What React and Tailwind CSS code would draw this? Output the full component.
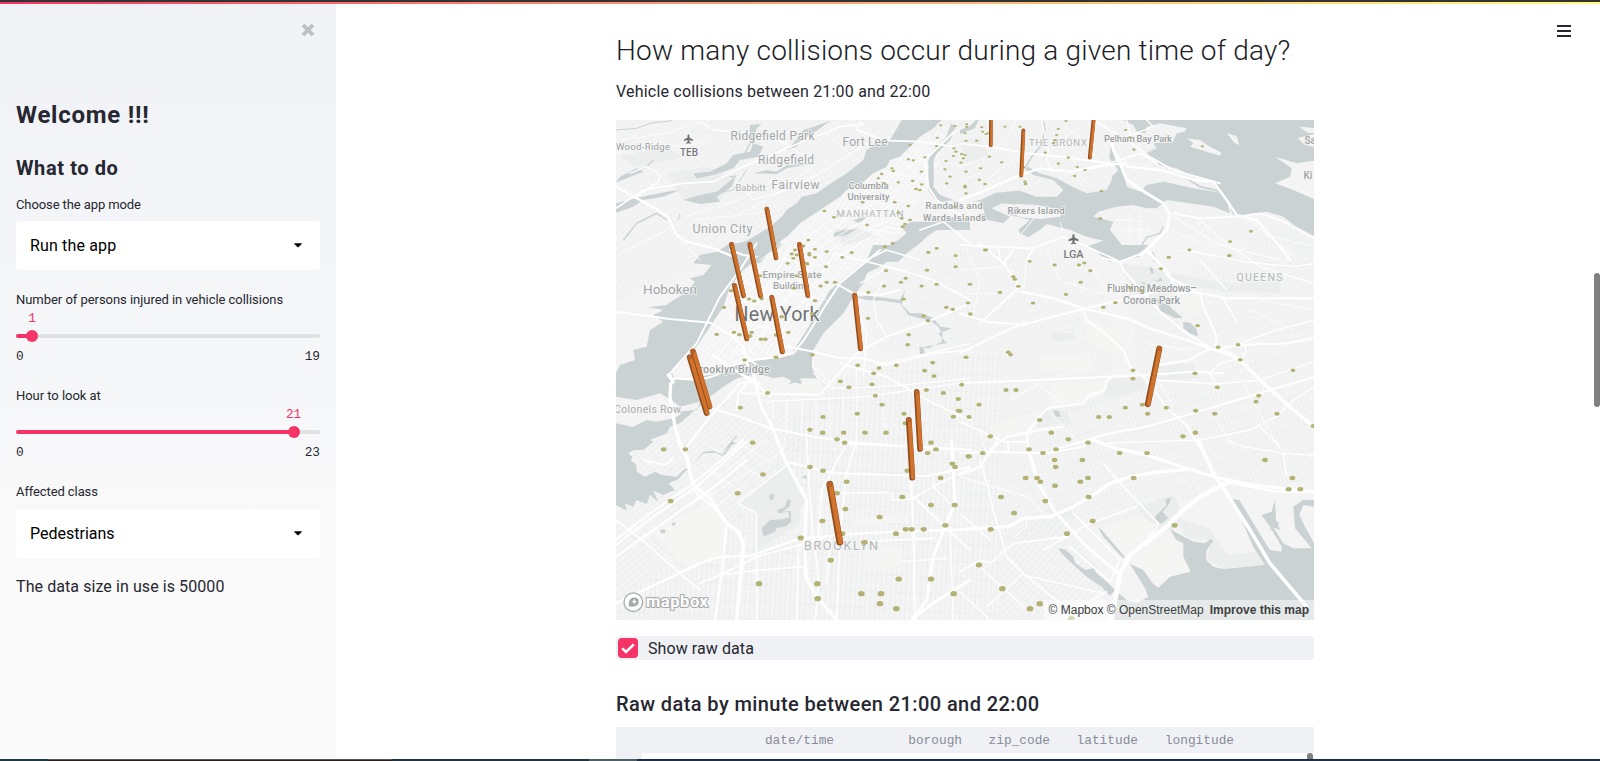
import React from "react";

/* Map geometry is stored in six drawing tiles; each unit is a third of a map pixel. */
const TILES = {
  A: [600, 0],
  B: [960, 0],
  C: [600, 250],
  D: [960, 250],
  E: [600, 440],
  F: [960, 440],
};
const place = (t) => `translate(${TILES[t][0]} ${TILES[t][1]}) scale(0.33333)`;

const WATER = [
  ["A", "M905 360H1025L1000 385L960 410L930 440L900 470L870 480L860 500L820 520L780 555L740 570L720 590L660 630L600 670L560 710L520 740L480 790H335L350 765L385 745L400 735L440 722L470 705L510 680L545 650L560 630L590 610L605 590L650 580L700 545L740 520L790 480L800 450L840 425L870 420Z"],
  ["C", "M390 -20L350 5L300 15L280 40L335 45L310 75L270 85L285 95L255 130L220 150L200 165L145 172L190 180L160 195L190 215L150 240L140 290L100 300L105 330L60 345L48 370V440L110 450L180 430L215 450L240 470L300 455L290 480L232 485L245 492L220 505L170 515L140 510L100 530L48 535V600H130L160 575L150 570L200 550L210 530L240 520L330 440L370 410L410 385L470 372L500 378L520 385L550 380L575 392L565 402L585 398L605 402L600 385L650 385L635 350L640 300L670 250L730 190L760 140L790 100L800 70L850 45L895 0L910 -15H820L800 30L720 95L690 120L660 170L620 240L575 310L530 325L430 335L350 370L260 390L222 385L215 365L290 290L330 230L370 170L390 110L430 60L480 20L530 0L550 -20Z"],
  ["C", "M765 140L800 150L850 152L900 160L925 195L960 205L985 210L1010 225L1028 250L1025 275L985 295L958 290L960 312L975 312L970 290L1040 280L1015 250L1055 235L1020 230L1000 205L965 190L930 190L905 165L915 120L900 150L860 145L810 138Z"],
  ["A", "M810 785L850 745L895 720L920 700L905 680L935 665L1010 665L1045 650L1110 655V690L1050 690L1010 690L980 710L960 730L920 760L895 785Z"],
  ["A", "M985 480L1000 470L1002 540L1000 560L1020 585L1060 600L1100 600V610L1050 612L1005 600L985 570Z"],
  ["B", "M0 610L60 600L110 578L180 572L230 590L290 590L310 570L280 540L220 525L195 508L205 500L235 518L290 535L340 562L380 580L440 570L460 530L480 540L500 560L540 575L560 555L610 545L700 565L795 580L810 640L760 620L690 610L620 600L590 625L560 625L520 615L470 620L415 635L400 650L460 665L450 690L490 740L560 745L540 770L450 785L405 750L385 738L430 722L380 710L330 690L260 672L240 690L205 712L180 700L175 690L210 660L150 645L150 630L180 615L125 610L95 625L150 650L130 670L60 655L0 665Z"],
  ["B", "M490 360H1062V600L1000 570L960 568L945 550L970 540L990 530L995 505L950 485L945 470L975 480L1010 485L1062 475V435L1035 435L1010 415L1035 400L1062 395V590V708L1010 680L970 650L920 635L860 645L820 645L800 600L760 550L680 520L650 505L600 495L560 460L590 445L580 430L640 425L650 400L675 395L680 385L600 370L560 380L555 400L530 395L520 375Z"],
  ["B", "M452 440L462 445L465 480L490 510L500 560L470 570L455 530L475 510L448 475Z"],
  ["D", "M395 -15H565L545 5L510 25L480 35L440 25L420 15Z"],
  ["D", "M588 140L600 155L625 165L640 180L668 203L645 205L600 182Z M670 215L690 218L708 235L715 260L690 250L670 235Z M568 48L580 58L582 72L572 68Z M578 88L595 92L600 80L608 92L592 95Z M280 480L295 482L303 500L288 500Z"],
  ["E", "M48 -50L140 -30L110 10L120 20L85 40L98 52L92 62L108 72L110 95L135 110L165 95L185 105L230 110L250 90L275 78L250 100L235 118L205 130L225 150L205 158L190 165L160 152L175 185L150 165L140 192L110 180L100 200L75 190L80 212L48 195Z"],
  ["E", "M275 75L310 40L350 38L370 50L395 15L410 10L395 5L380 30L365 42L340 32L310 35Z"],
  ["E", "M485 265L510 240L545 238L568 232L565 215L535 220L532 210L555 200L562 178L572 180L568 200L548 215L572 212L574 245L560 258L530 265L525 275L490 290Z M508 165L522 160L520 180L508 178Z M180 268L197 270L195 280L183 280Z M215 250L226 246L226 254L217 258Z M605 112L618 105L620 118Z"],
  ["F", "M630 268L680 295L700 305L735 310L752 296L760 302L740 330L738 360L760 380L790 387L915 375L880 320L818 178L838 180L905 290L930 330L965 335L965 320L930 260L905 225L935 215L945 180L948 240L960 270L940 262L970 310L1000 325L1055 325L1035 300L1005 265L1000 200L1030 180H1062V200L1030 195L1018 225L1035 260L1062 310V540H450L470 455L500 480L530 490L565 470L555 445L510 372L550 390L578 430L595 443L630 410L692 395L670 350V310L650 300Z"],
  ["F", "M413 260L425 270L494 350L488 354L430 290Z M295 325L315 328L340 350L345 368L375 390L400 385L410 400L445 430L465 450L450 468L425 440L380 410L335 370L305 340Z M585 230L605 210L620 195L615 180L635 172L625 195L608 215L625 235L605 250L588 248Z"],
  ["A", "M280 520L330 515L380 490L400 465L450 455L460 430L490 440L475 470L420 480L400 505L340 525L290 535Z M48 610L120 592L200 575L240 570L190 590L130 600L100 620L48 638Z M300 585L350 575L400 535L385 530L410 525L395 560L350 590L360 605L300 612L250 600Z M460 520L500 510L530 515L560 495L640 490L560 505L530 522Z M48 548L60 530L110 505L130 515L80 535Z M340 775L385 755L380 780Z"],
  ["A", "M450 375L485 372L470 385L460 430L448 420Z M610 390L640 380L690 362L640 400L610 415L590 440L560 450L580 430Z"],
  ["A", "M700 700L730 690L770 688L740 705L705 712Z M760 660L790 650L800 655L775 670Z"],
  ["B", "M0 390L30 378L48 360H55L45 385L0 402Z"],
];

const WATERLINES = [
  ["A", "M48 390L110 385L150 370L215 362", 3],
  ["A", "M1060 375L1045 415L1005 455L992 480", 15],
  ["A", "M450 430L430 470L380 500M160 480L140 500L100 520M70 720L110 670L170 640L200 660", 4],
  ["A", "M440 510L400 570L350 580M240 640L235 660", 3],
  ["B", "M195 505L215 470L245 435L255 390L250 365", 5],
  ["B", "M680 535L720 560L800 578", 5],
  ["B", "M545 735L560 712L600 700L610 680", 4],
  ["D", "M575 5L585 20L582 35M545 98L555 102", 5],
  ["F", "M910 225L940 250L930 230L955 250L930 270", 4],
  ["C", "M375 600L410 558", 4],
];

const ISLANDS = [
  ["B", "M680 415L720 420L750 440L785 458L780 467L740 455L690 440L700 430Z"],
  ["B", "M800 400L830 408L838 435L825 430Z"],
  ["B", "M145 630L170 612L230 615L310 630L300 650L240 657L180 652Z"],
  ["B", "M1018 380L1062 384V398L1045 400Z M1012 415L1062 402V440L1035 435Z M945 470L1010 490L1062 482V598L1000 570L945 550L990 530L995 505Z"],
  ["A", "M985 620L1040 602L1110 598V655L1045 650L1000 645Z"],
  ["B", "M0 600L60 605L75 640L30 655L0 652Z"],
];

const PARKS = [
  ["E", "M415 190L560 75L625 180L600 200L595 255L470 330V220Z"],
  ["F", "M530 200L640 165L660 200L640 270L590 280Z M640 230L745 265L805 345L935 330L915 375L790 385L740 360L755 300L680 295Z M270 215L330 205L345 230L290 235Z"],
  ["D", "M440 390L550 375L560 420L430 445Z M580 350L700 340L710 385L580 390Z M480 40L620 60L640 130L580 150L500 90Z M630 70L800 100L960 95L960 130L800 125L640 95Z M210 495L250 480L320 485L330 515L225 535Z M270 250L345 248L340 270L275 275Z"],
  ["A", "M200 520L330 500L400 540L360 600L250 600Z M700 690L770 680L830 710L730 735Z M60 470L190 440L250 470L110 500Z"],
  ["B", "M560 450L590 440L600 490L560 480Z M0 420L60 415L90 470L20 490Z"],
];

const PALE = [
  ["E", "M160 275L310 190L385 255L365 340L265 385Z M760 235L925 225L930 245L765 255Z M790 330L905 325L900 380L790 385Z"],
  ["D", "M270 415L440 388L430 435L370 455L265 470Z M240 320L385 310L405 360L240 362Z M80 530L250 480L215 560L110 565Z M640 150L715 130L720 190L680 195Z M370 205L480 240L470 310L385 275Z"],
  ["F", "M450 265L540 230L590 255L540 300L500 345L440 290Z M510 360L640 285L690 395L590 440Z"],
  ["C", "M505 385L555 385L600 400L660 388L670 430L515 430Z"],
];

const ROADS = [
  ["A", "M860 422L960 425L1062 440", 5],
  ["A", "M48 560L110 595L165 625L205 650L225 700L260 725L340 745L400 770", 7],
  ["A", "M48 625L100 590L130 570L250 550L340 545L430 500L500 470L620 420L720 380L790 372", 5],
  ["A", "M90 520L140 500L180 525L175 545L110 590M300 365L340 390L450 400L560 430M780 365L770 390L840 415", 4],
  ["A", "M230 705L300 780M400 530L460 600L560 570L660 520L800 430", 3],
  ["A", "M1062 395L1000 455L975 480L985 560L1010 600L1100 660", 6],
  ["A", "M540 780L700 650L850 550L960 480M600 780L760 680L900 600M700 780L860 680L905 690M820 690L900 700", 3],
  ["A", "M570 780L730 665L880 575L980 530M640 780L800 690L905 645M480 780L560 720M1010 600L940 600L900 640M870 520L960 530M930 450L985 500", 2.2],
  ["A", "M48 460L160 430L250 440L330 420M60 420L200 400L300 365M420 640L500 600L640 500M250 650L420 600L520 540M60 760L200 690M280 660L470 640L560 610M500 400L620 470M680 400L760 470", 2],
  ["A", "M960 690L1030 665L1110 730M800 780L860 750L960 780", 5],
  ["B", "M0 600L60 578L180 525L240 505L330 515L440 495L495 490L500 500L600 510L640 520L700 540L760 545L800 600L830 645L890 660L960 740L990 780", 7],
  ["B", "M455 425L460 450L480 490L500 540L560 580L610 610L630 645L620 690L570 740L540 765", 9],
  ["B", "M0 430L90 440L200 460L300 470L450 490L540 460L590 490M400 360L500 420L560 465L640 510L780 550", 5],
  ["B", "M245 360L265 450L260 475L275 515M500 360L510 400M560 360L580 380L500 410", 4],
  ["B", "M0 500L80 470L150 400L170 360M60 560L130 500L200 450M300 370L380 430L420 490M0 540L60 520M330 515L400 560", 2.2],
  ["B", "M0 735L100 740L220 745L310 710L370 735L470 780", 5],
  ["B", "M120 780L115 745M200 780L220 745M640 640L720 655L830 650L900 640L960 660L1062 715", 5],
  ["B", "M700 645L790 720L850 780M640 650L780 735L960 780M870 660L1000 770", 3],
  ["B", "M185 700L222 655M300 668L310 690", 3],
  ["B", "M470 660L560 665M480 690L570 690M510 640V730M540 640V735M650 700L760 740M640 750L780 770M900 700L1062 740", 2],
  ["C", "M48 185L210 207L330 218L400 260L430 290", 6],
  ["C", "M390 0L430 15L470 20", 6],
  ["C", "M470 -20L420 60L360 140L330 200L290 280L210 370L215 385L300 390L350 375L400 345L460 330L540 320L580 310L615 265L650 210L680 160L720 100L840 0", 6],
  ["C", "M205 375L220 395L212 400L210 440L225 530L245 600", 10],
  ["C", "M340 315L380 345L470 400L510 440M430 290L440 340L460 370L480 460L520 540L545 600", 8],
  ["C", "M420 300L450 330L470 345M540 285L640 305L720 325L790 325L860 345", 6],
  ["C", "M700 96L760 130L840 135L900 120", 6],
  ["C", "M700 10L800 35L900 60L1000 90L1110 150", 5],
  ["C", "M260 590L330 500L420 400L440 395L480 400", 7],
  ["C", "M330 475L420 500L510 535L640 560L780 580L1110 600", 6],
  ["C", "M410 480L415 430L440 400M430 430L660 434L690 400L770 310L860 260L960 225L1110 160", 6],
  ["C", "M500 455L800 440L1110 395M690 415L860 410L1110 385M760 140L800 250L790 380M830 345L1110 280", 3.5],
  ["C", "M845 100L820 150L830 210L860 260M780 100L850 60M640 370L690 410M640 300L640 350L700 410", 3.5],
  ["C", "M720 340L860 380L1000 460L1110 510M860 345L1000 310L1110 300", 5],
  ["C", "M360 310L410 250L470 150L540 50M400 260L480 230L560 240M390 330L440 240L520 110M450 300L520 200L620 60M500 310L590 180L700 20", 3],
  ["C", "M420 250L530 60L570 0M470 290L560 150L670 0M530 290L600 190M380 200L600 270M410 150L640 200M440 100L680 150M470 60L700 90M500 20L760 60", 2.2],
  ["C", "M550 600L560 540M620 600V540M700 600L740 570M770 600V330M860 590L850 470M520 450L515 540M560 450V545M605 455V548M648 450V560M690 440V565M730 430V572", 2.5],
  ["D", "M0 190L80 215L190 225L240 210L370 178L500 145L590 125L720 128L800 145L1062 145", 6],
  ["D", "M160 0L130 40L180 110L60 220M130 40L60 -20M0 310L100 260L200 215", 5],
  ["D", "M180 125L280 145L380 178L500 205L570 235L680 270L750 295L840 325", 7],
  ["D", "M370 180L380 210L440 255L490 300L510 350L555 385L590 430L620 475L680 525L725 600", 6],
  ["D", "M430 25L480 35L490 60L560 140L600 185L680 250L745 290M480 35L560 5L620 60L640 100", 6],
  ["D", "M565 0L590 30L625 80L720 130L730 170L770 260L765 290M1062 265L980 280L840 285L740 300L690 330L600 345", 6],
  ["D", "M770 290L840 330L900 390L1000 480L1062 530", 10],
  ["D", "M845 280L860 300L845 330M840 280L950 240L1062 210M790 145L830 215", 4],
  ["D", "M0 400L230 390L450 380L560 375L700 365L790 370M460 375L440 395L435 420L390 435L370 460L260 475L200 550L205 600", 6],
  ["D", "M90 600L140 560L240 540L310 530M200 575L130 575L0 515M280 600L450 550L560 530L700 490L900 430L1062 380", 6],
  ["D", "M580 390L770 402L900 390L1062 335M765 400L750 370L780 340L840 325", 4],
  ["D", "M440 580L560 575L720 570L870 540L950 500L1000 450L1062 410", 4],
  ["D", "M680 0L850 35L1000 50L1062 40M830 0L900 50L1062 100M720 30L800 120", 4],
  ["D", "M60 540L75 600M150 450L240 400M240 410L310 460M260 475L300 520L350 570", 3],
  ["D", "M0 60L130 50M20 0L60 90L40 190M200 30L190 120M260 0L300 90L420 130M0 130L110 130M400 60L450 130M520 240L495 300M550 280L690 300M900 150L1062 180M870 180L1000 240M850 400L960 600M760 500L830 600M600 400L640 470", 2.2],
  ["E", "M235 0L260 50L275 120L285 140L330 175L380 250L415 275L430 310L425 380L410 540", 11],
  ["E", "M48 300L150 220L280 130L400 30L430 0M48 315L160 230L290 140L440 5", 6],
  ["E", "M48 350L160 270L330 150L440 60M285 155L370 230L380 250L365 400L345 540", 7],
  ["E", "M48 240L150 320L250 410L300 450M300 430L360 405L470 350L600 315L680 290", 5],
  ["E", "M530 0L560 70L620 180L615 280L618 410L650 470L710 540", 10],
  ["E", "M560 65L660 90L700 100L980 108L1110 80", 6],
  ["E", "M620 0L630 180L640 300L650 360L655 440L645 540M770 0L740 100L720 280L710 540M735 20L665 150L655 290", 5],
  ["E", "M48 490L300 370L360 350L450 348L600 295L780 280L900 275L1110 268", 7],
  ["E", "M360 405L480 390L610 380M470 330V540M595 320L590 540M690 290L680 430M780 305L1000 295", 5],
  ["E", "M930 0L935 170L940 260L945 540M730 10L1110 30M940 170L1040 265L1110 330", 6],
  ["E", "M1055 0L1065 190L1035 260L1000 350L980 480L935 540M1110 420L1000 490L945 530", 9],
  ["E", "M700 160L870 158M875 160V180L935 178L1000 140L1110 85M1000 110V140L1050 190M905 365L1040 355M1050 260L1060 540", 4],
  ["E", "M415 190L560 75M130 60L200 75L220 50M415 190L470 220V330", 4],
  ["E", "M300 150L500 0M320 170L540 40M350 200L440 130M110 40L160 80L230 60M280 60L420 150M330 20L480 110M400 0L520 70M100 250L230 380", 2.2],
  ["F", "M0 268L110 262L150 258L190 235L270 230L330 205L400 165L450 130L510 110L600 95L690 88", 10],
  ["F", "M400 0L450 20L560 45L680 85L780 115L880 135L1062 155", 9],
  ["F", "M715 0L760 100L800 160L870 270L930 370L1040 500", 11],
  ["F", "M810 125L720 170L670 210L620 260L510 345L480 400L455 540", 14],
  ["F", "M815 130L950 155H1062", 7],
  ["F", "M205 30L240 140L285 215L370 310L480 405", 9],
  ["F", "M0 40L90 35L260 40L370 20L400 0M90 35L60 80L0 105M110 5L90 40M145 10V40", 6],
  ["F", "M60 60L80 130L105 230L140 350L190 400L300 490", 5],
  ["F", "M0 395L60 360L90 370L160 310L320 290L390 250L530 200M320 290L250 330M330 320L450 425L480 360L340 220", 5],
  ["F", "M190 405L430 460M190 400L80 500M60 380L190 500M0 455L90 540M290 540L440 455", 4],
  ["F", "M430 70L500 150L595 250L590 265L565 290", 5],
  ["F", "M800 0L850 20L970 40L1062 45M970 40L980 110M900 -40L960 20M0 220L90 300", 4],
  ["F", "M270 235L200 170L0 110M165 290L200 260L200 235", 3],
];

/* Textures for the dense street grid: polygon, pattern id */
const GRIDS = [
  ["616,120 900,120 850,170 790,210 740,248 700,265 616,300", "nj"],
  ["930,120 1320,120 1320,250 1000,210 930,180", "nj"],
  ["950,125 935,175 890,245 840,275 790,355 715,375 675,375 735,270 800,215 900,150", "manh"],
  ["616,460 700,400 790,390 810,440 740,520 616,600", "slope"],
  ["616,600 730,525 790,440 800,380 1000,350 1000,620 616,620", "vert"],
  ["1000,350 880,350 860,300 900,250 1080,250 1110,310 1110,400 1000,450", "queens"],
  ["1000,430 1100,390 1314,400 1314,480 1180,500 1130,520 1000,545", "vert2"],
  ["1000,545 1060,500 1110,590 1040,620 1000,620", "slope2"],
  ["1130,300 1314,210 1314,400 1140,400", "queens"],
];

const PILLARS = [
  [991, 115, 990.7, 145.5, 3.6],
  [1023.3, 130.5, 1021.2, 175.5, 3.8],
  [1094, 115, 1089.8, 157.5, 3.8],
  [766.8, 209, 776, 258, 4.6],
  [731.5, 244.3, 743.5, 295.7, 4.8],
  [749.8, 244.3, 760.5, 295.7, 4.8],
  [799.4, 244.3, 807.8, 295.7, 4.8],
  [734.5, 285.5, 746.7, 338.7, 5],
  [771.8, 297.5, 782.3, 351.7, 5],
  [854.7, 295.2, 860.5, 348.8, 5],
  [693, 351.4, 709.5, 406.6, 5.6],
  [689.8, 357.4, 706.6, 413, 5.8],
  [916.7, 391.8, 920, 449, 5.6],
  [908.8, 420, 912.3, 477.7, 5.8],
  [829.8, 484.3, 839.8, 542, 6.8],
  [1159.3, 348.6, 1147.8, 404.2, 6],
];

const DOTS = {
  A: "1022,376 1065,378 1100,380 1012,413 1062,445 1068,455 1060,468 1085,462 1083,488 1010,438 930,435 925,478 940,481 975,472 964,515 880,513 876,505 845,522 835,535 895,547 938,543 965,553 960,570 948,567 853,550 788,607 884,607 925,618 895,638 905,655 930,660 908,680 915,672 673,633 702,652 801,675 855,740 878,730 985,757 1010,745 1038,483 1035,508 1050,530 1098,515 1040,550 1095,562 1065,620 625,720 610,738 585,750 645,748 628,760 605,770 590,765",
  B: "20,373 65,382 135,380 180,380 15,400 18,422 50,422 78,402 85,400 92,434 68,395 15,465 10,475 88,470 125,487 62,505 58,540 15,558 18,580 75,552 195,545 197,552 190,502 256,458 325,473 295,491 352,501 375,510 344,528 285,420 290,405 295,387 318,363 280,430 497,390 522,449 727,439 424,573 421,656 873,694 810,725 688,750 626,772 808,767 78,750 510,412",
  C: "575,12 628,15 580,25 620,40 563,40 645,22 678,50 680,5 727,22 755,8 480,78 590,78 622,42 582,115 680,97 705,97 662,108 372,172 393,122 447,147 463,153 485,146 645,152 545,200 637,192 350,253 402,247 418,254 455,247 450,258 483,268 496,268 528,255 565,247 434,330 528,322 637,314 503,429 421,473 805,127 852,108 858,62 903,97 917,85 965,108 1010,103 981,61 985,7 1067,17 1067,50 911,147 804,205 971,198 984,212 926,254 923,284 1039,172 1058,178 889,346 837,354 821,370 773,346 721,394 747,412 816,403 826,437 846,464 912,491 669,501 772,491 630,539 668,548 731,548 711,568 795,548 858,548 998,338 974,362 1002,378 979,420 1030,429 1075,447 1075,482 1060,500 916,520",
  D: "75,0 209,34 284,45 357,45 373,39 391,62 362,97 160,80 165,88 175,109 120,127 30,103 24,159 219,159 318,133 31,192 430,172 466,158 626,22 808,17 603,56 512,114 545,122 713,227 774,292 834,284 841,329 999,361 705,370 772,412 896,437 888,455 951,491 1060,528 145,307 152,314 18,322 5,404 138,420 168,420 519,361 519,386 57,464 27,501 239,510 274,548 91,559 325,568 416,501 448,501 496,473 547,464 563,491 619,473 707,482 764,491 706,548 669,559 0,483",
  E: "191,28 256,28 458,8 212,183 413,160 489,103 477,431 630,81 669,92 740,125 711,160 736,207 667,243 602,294 727,281 692,361 652,431 653,476 794,307 839,231 907,171 922,92 983,39 1008,28 993,8 1057,71 1065,81 1022,114 1064,195 993,195 888,281 917,268 935,268 971,268 1036,256 896,417 993,417 784,461 843,461 840,491 889,506 1061,461 734,8 1105,49",
  F: "27,49 68,39 207,28 249,39 288,28 384,8 284,60 287,81 367,60 197,114 231,114 241,125 285,137 361,125 384,114 256,183 123,171 162,219 92,268 386,171 398,243 321,281 521,114 479,39 561,39 644,256 915,60 997,114 986,148 1021,148 57,375 127,446 210,506 239,491 334,536",
};

/* Dots grow towards the viewer, so their size follows the vertical position. */
const DISCS = Object.entries(DOTS).flatMap(([t, list]) =>
  list.split(" ").map((p) => {
    const [x, y] = p.split(",").map(Number);
    const py = TILES[t][1] + y / 3;
    const near = (py - 120) / 500;
    return [TILES[t][0] + x / 3, py, 1.65 + near * 1.75, 0.95 + near * 1.75];
  })
);

/* text, centre x, baseline, width, size, colour, weight */
const LABELS = [
  ["Wood-Ridge", 643, 150, 54, 9.5, "#9b9fa0", 400],
  ["TEB", 689, 156, 18, 10, "#76797a", 500],
  ["Ridgefield Park", 772.5, 140, 84, 12, "#a3a6a7", 400],
  ["Ridgefield", 786, 163.5, 56, 12, "#a3a6a7", 400],
  ["Fort Lee", 865, 146, 45, 12, "#a3a6a7", 400],
  ["Babbitt", 750.5, 191, 30, 9.4, "#abaeaf", 400],
  ["Fairview", 795.5, 189, 48, 12, "#a3a6a7", 400],
  ["Columbia", 868.5, 189, 40, 9.5, "#9b9fa0", 500],
  ["University", 868.5, 199.5, 42, 9.5, "#9b9fa0", 500],
  ["MANHATTAN", 870, 217, 67, 9.5, "#b3b6b6", 400],
  ["Randalls and", 954, 209, 57, 9.5, "#9b9fa0", 500],
  ["Wards Islands", 954.5, 221, 63, 9.5, "#9b9fa0", 500],
  ["Union City", 722.5, 233, 60, 12.5, "#a3a6a7", 400],
  ["THE BRONX", 1058, 145.5, 58, 9.5, "#b3b6b6", 400],
  ["Pelham Bay Park", 1138, 141.5, 68, 9.5, "#9b9fa0", 500],
  ["Rikers Island", 1036, 214, 57, 9.5, "#9b9fa0", 500],
  ["LGA", 1073.5, 258, 20, 11, "#76797a", 500],
  ["Empire State", 792, 278, 59, 9.8, "#a3a6a7", 500],
  ["Building", 791, 289, 36, 9.8, "#a3a6a7", 500],
  ["Hoboken", 670, 294, 54, 13.5, "#a3a6a7", 400],
  ["New York", 777, 320.6, 85, 19.6, "#6f7273", 400],
  ["Brooklyn Bridge", 731, 373, 77, 10.5, "#9b9fa0", 500],
  ["Colonels Row", 647.5, 413, 67, 10.5, "#a9acad", 400],
  ["QUEENS", 1259.5, 281, 46, 10.5, "#b3b6b6", 400],
  ["Flushing Meadows–", 1152, 292, 90, 10.5, "#9b9fa0", 500],
  ["Corona Park", 1151.5, 303.5, 57, 10.5, "#9b9fa0", 500],
  ["BROOKLYN", 841, 550, 74, 12.5, "#b3b6b6", 400],
];

function Layer({ items, fill }) {
  return items.map(([t, d], i) => <path key={i} transform={place(t)} d={d} fill={fill} />);
}

function GridPattern({ id, angle, w, h, color, strong }) {
  return (
    <pattern id={id} width={w} height={h} patternUnits="userSpaceOnUse" patternTransform={`rotate(${angle})`}>
      <path d={`M0 0V${h}`} stroke={color} strokeWidth={strong} />
      <path d={`M0 0H${w}`} stroke={color} strokeWidth="1" />
    </pattern>
  );
}

function Plane({ x, y, s }) {
  return (
    <path
      transform={`translate(${x} ${y}) scale(${s})`}
      d="M0-5C.9-5 1.1-4 1.1-3V-1.4L5 .6V2.2L1.1 1.2V3.4L2.6 4.5V5.3L0 4.8L-2.6 5.3V4.5L-1.1 3.4V1.2L-5 2.2V.6L-1.1-1.4V-3C-1.1-4-.9-5 0-5Z"
      fill="#6f7273"
    />
  );
}

function CollisionMap() {
  return (
    <svg viewBox="616 120 698 500" width="698" height="500" className="block">
      <defs>
        <GridPattern id="nj" angle={-28} w={5} h={7} color="#ebeded" strong={1} />
        <GridPattern id="manh" angle={37} w={4.5} h={9} color="#fdfdfd" strong={1.2} />
        <GridPattern id="slope" angle={50} w={5} h={14} color="#e8ecec" strong={1} />
        <GridPattern id="vert" angle={3} w={5} h={17} color="#e6eaea" strong={1} />
        <GridPattern id="vert2" angle={-16} w={4} h={13} color="#e8ecec" strong={1} />
        <GridPattern id="slope2" angle={42} w={5} h={12} color="#e6eaea" strong={1} />
        <GridPattern id="queens" angle={-12} w={4.5} h={8} color="#ebeeee" strong={1} />
      </defs>
      <rect x="616" y="120" width="698" height="500" fill="#f3f4f3" />
      {GRIDS.map(([pts, id], i) => (
        <polygon key={i} points={pts} fill={`url(#${id})`} />
      ))}
      <Layer items={PARKS} fill="#ebeeed" />
      <Layer items={PALE} fill="#f5f5f4" />
      <Layer items={WATER} fill="#cad2d3" />
      {WATERLINES.map(([t, d, w], i) => (
        <path key={i} transform={place(t)} d={d} fill="none" stroke="#cad2d3" strokeWidth={w} />
      ))}
      <Layer items={ISLANDS} fill="#f3f4f3" />
      {ROADS.map(([t, d, w], i) => (
        <path key={i} transform={place(t)} d={d} fill="none" stroke="#ffffff" strokeWidth={w} strokeLinejoin="round" strokeLinecap="round" />
      ))}
      <g fontFamily='Roboto, "Liberation Sans", sans-serif' textAnchor="middle">
        {LABELS.map(([text, x, y, w, size, color, weight], i) => (
          <text key={i} x={x} y={y} textLength={w} fontSize={size} fontWeight={weight} fill={color} stroke="#f6f7f7" strokeWidth="1.6" strokeLinejoin="round" paintOrder="stroke">
            {text}
          </text>
        ))}
        <g textAnchor="start" fontSize="10" fontWeight="500" fill="#a3a6a7">
          <text x="1304.5" y="144">Sa</text>
          <text x="1303.5" y="179">Ki</text>
        </g>
      </g>
      <Plane x={688.5} y={139} s={0.9} />
      <Plane x={1073.5} y={239} s={1} />
      <g fill="#b3b274">
        {DISCS.map(([x, y, rx, ry], i) => (
          <ellipse key={i} cx={x} cy={y} rx={rx} ry={ry} />
        ))}
      </g>
      {PILLARS.map(([x1, y1, x2, y2, w], i) => (
        <g key={i} strokeLinecap="round">
          <path d={`M${x1} ${y1}L${x2} ${y2}`} stroke="#8f4d1e" strokeWidth={w} />
          <path d={`M${x1 + 0.7} ${y1}L${x2 + 0.7} ${y2}`} stroke="#d1722d" strokeWidth={w * 0.66} />
          <circle cx={x1} cy={y1} r={w * 0.42} fill="#b8622a" />
        </g>
      ))}
      <g>
        <circle cx="633.3" cy="602.2" r="9.3" fill="#fff" stroke="#a9acac" strokeWidth="1.4" />
        <path d="M628.9 606.4C628.2 602 629.6 598 634 597.6C637.2 597.5 638.9 599.6 638.7 602.2C638.3 605.8 634 607.2 628.9 606.4Z" fill="#a4a7a7" />
        <path d="M634.3 598.8L635.2 600.7L637.1 601.6L635.2 602.5L634.3 604.4L633.4 602.5L631.5 601.6L633.4 600.7Z" fill="#fff" />
        <text x="646" y="606.5" textLength="62" fontFamily='Roboto, "Liberation Sans", sans-serif' fontSize="16.5" fontWeight="700" fill="#fff" stroke="#a9acac" strokeWidth="2.2" strokeLinejoin="round" paintOrder="stroke">
          mapbox
        </text>
      </g>
    </svg>
  );
}

function Select({ value, tracking }) {
  return (
    <div className="flex h-[49px] shrink-0 items-center justify-between rounded-[4px] bg-white pr-[18px] pl-[14px] text-base text-black">
      <span className={tracking}>{value}</span>
      <svg width="8" height="5" viewBox="0 0 8 5">
        <path d="M.3.3H7.7V1L4.6 4.1Q4 4.6 3.4 4.1L.3 1Z" fill="#000" />
      </svg>
    </div>
  );
}

function Slider({ label, value, max }) {
  const pct = `${(value / max) * 100}%`;
  return (
    <div className="flex flex-col">
      <div className="h-5 text-[13px] leading-5 tracking-[-0.04px] whitespace-nowrap">{label}</div>
      <div className="relative mt-px h-[39px] font-['Liberation_Mono',monospace] text-[12.8px] leading-4 text-[#f63366]">
        <span className="absolute top-0 -translate-x-1/2" style={{ left: pct }}>{value}</span>
        <div className="absolute inset-x-0 top-[23px] h-1 overflow-hidden rounded-full bg-[#e0e1e2]">
          <div className="h-full bg-[#f63366]" style={{ width: pct }} />
        </div>
        <div className="absolute top-[19px] size-3 -translate-x-1/2 rounded-full bg-[#f63366]" style={{ left: pct }} />
      </div>
      <div className="-mt-px flex h-4 justify-between font-['Liberation_Mono',monospace] text-[12.8px] leading-4">
        <span>0</span>
        <span>{max}</span>
      </div>
    </div>
  );
}

function Sidebar() {
  return (
    <aside className="relative flex w-[336px] shrink-0 flex-col bg-linear-to-b from-[#f0f2f6] to-[#fafafa] to-80% px-4 pt-[95px]">
      <svg className="absolute top-[19px] left-[301px]" width="14" height="14" viewBox="0 0 14 14">
        <path d="M2 2L12 12M12 2L2 12" stroke="#bdbfc3" strokeWidth="3.8" />
      </svg>
      <h1 className="h-8 text-2xl leading-8 font-bold tracking-[0.75px] whitespace-nowrap">Welcome !!!</h1>
      <h2 className="mt-[23px] h-7 text-xl leading-7 font-bold tracking-[0.6px]">What to do</h2>
      <div className="mt-[13px] mb-[6px] h-5 text-[13px] leading-5 tracking-[-0.1px]">Choose the app mode</div>
      <Select value="Run the app" tracking="tracking-[0.15px]" />
      <div className="mt-5">
        <Slider label="Number of persons injured in vehicle collisions" value={1} max={19} />
      </div>
      <div className="mt-[21px]">
        <Slider label="Hour to look at" value={21} max={23} />
      </div>
      <div className="mt-[21px] mb-[7px] h-5 text-[13px] leading-5 tracking-[-0.1px]">Affected class</div>
      <Select value="Pedestrians" tracking="tracking-normal" />
      <p className="mt-[17px] text-base leading-6 tracking-[0.08px] whitespace-nowrap">The data size in use is 50000</p>
    </aside>
  );
}

export default function App() {
  return (
    <div className="flex h-[761px] w-[1600px] flex-col overflow-hidden bg-white font-[Roboto,'Liberation_Sans',sans-serif] text-[#262730]">
      <div className="h-[2px] shrink-0 bg-[#333333]" />
      <div className="h-[2px] shrink-0 bg-linear-to-r from-[#f63366] to-[#fffd80]" />
      <div className="flex min-h-0 flex-1">
        <Sidebar />
        <main className="flex min-w-0 flex-1 justify-center overflow-hidden">
          <div className="flex w-[698px] flex-col pt-[29px]">
            <h2 className="h-9 text-[28px] leading-9 font-light tracking-[0.19px] whitespace-nowrap text-[#1c1d26]">How many collisions occur during a given time of day?</h2>
            <p className="mt-[11px] h-6 text-base leading-6 tracking-[0.2px] whitespace-nowrap">Vehicle collisions between 21:00 and 22:00</p>
            <div className="relative mt-4 h-[500px] w-[698px] shrink-0 overflow-hidden">
              <CollisionMap />
              <div className="absolute right-0 bottom-0 flex h-5 items-center gap-[6px] bg-white/50 px-[5px] font-['Liberation_Sans',Arial,sans-serif] text-xs whitespace-nowrap text-[#404040]">
                <span>© Mapbox © OpenStreetMap</span>
                <span className="font-bold">Improve this map</span>
              </div>
            </div>
            <label className="mt-4 flex h-6 shrink-0 items-center gap-[10px] rounded-[4px] bg-[#f0f1f5] pl-[2px]">
              <span className="flex size-5 items-center justify-center rounded-[4px] bg-[#f63366]">
                <svg width="14" height="11" viewBox="0 0 14 11">
                  <path d="M1.2 5.4L5 9L12.8 1.4" fill="none" stroke="#fff" strokeWidth="2.6" />
                </svg>
              </span>
              <span className="pt-[2px] tracking-[0.08px]">Show raw data</span>
            </label>
            <h3 className="mt-[30px] h-7 shrink-0 text-xl leading-7 font-medium tracking-[0.41px] whitespace-nowrap">Raw data by minute between 21:00 and 22:00</h3>
            <div className="mt-[9px] flex shrink-0 flex-col font-['Liberation_Mono',monospace] text-[12.8px] text-[#888b9b]">
              <div className="grid h-[26px] grid-cols-[218px_128px_88px_88px_96px_80px] items-center bg-[#f0f1f5] pt-[2px] text-right leading-4">
                <span>date/time</span>
                <span>borough</span>
                <span>zip_code</span>
                <span>latitude</span>
                <span>longitude</span>
              </div>
              <div className="flex h-[6px] justify-between">
                <div className="w-[26px] bg-[#f0f1f5]" />
                <div className="mr-px w-[6px] rounded-t-full bg-[#808080]" />
              </div>
            </div>
          </div>
        </main>
        <div className="relative flex w-[6px] shrink-0 flex-col pt-[269px]">
          <div className="h-[134px] rounded-full bg-[#808080]" />
          <svg className="absolute top-[20px] right-[29px]" width="14" height="14" viewBox="0 0 14 14">
            <path d="M0 2H14M0 7H14M0 12H14" stroke="#262730" strokeWidth="1.8" />
          </svg>
        </div>
      </div>
      <div className="flex h-[2px] shrink-0">
        <div className="w-12 bg-[#1f3943]" />
        <div className="w-[344px] border-t border-[#5a5453] bg-[#2a2022]" />
        <div className="w-[197px] bg-[#1f3440]" />
        <div className="w-12 bg-[#4d5f66]" />
        <div className="flex-1 bg-[#1c2f42]" />
      </div>
    </div>
  );
}
